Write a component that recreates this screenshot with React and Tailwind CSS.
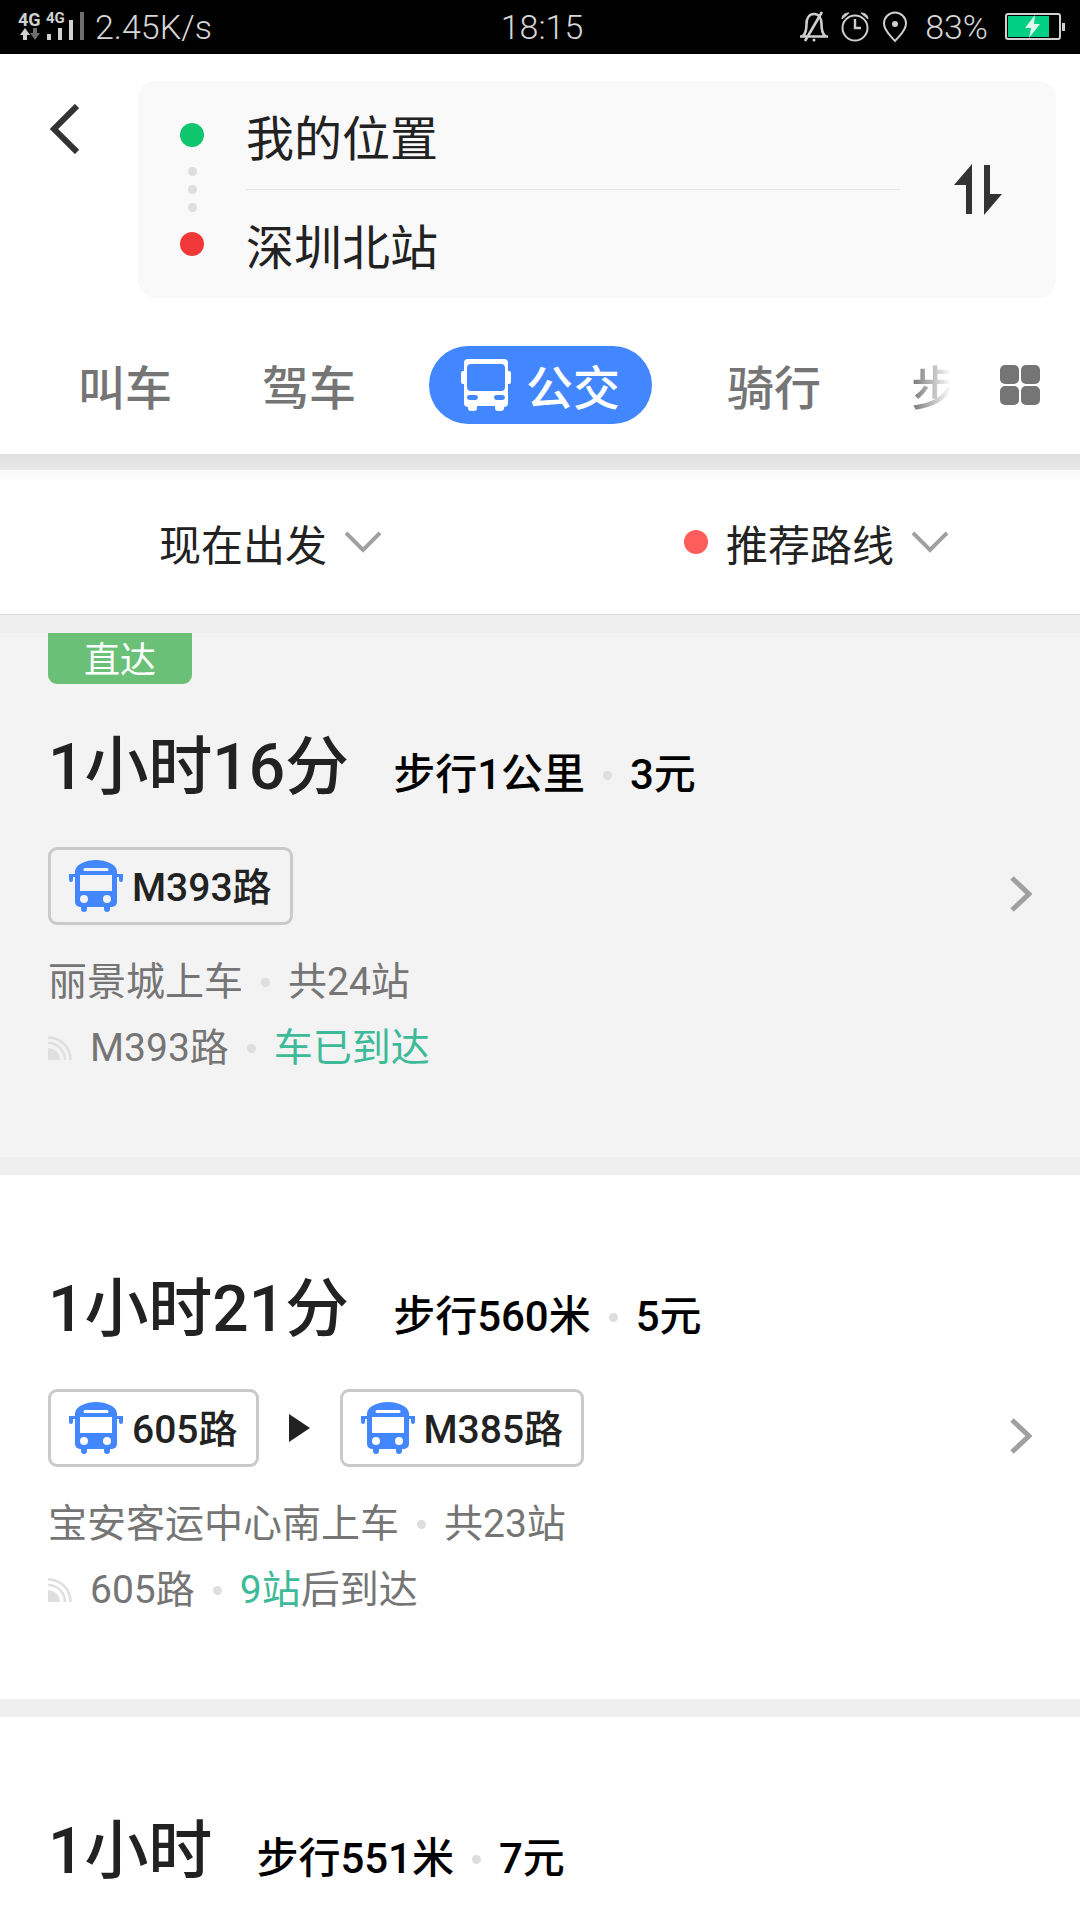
import React, { useState } from 'react';

const tabs = [
  { id: 'taxi', label: '叫车' },
  { id: 'drive', label: '驾车' },
  { id: 'bus', label: '公交' },
  { id: 'ride', label: '骑行' },
];

const routes = [
  {
    id: 1,
    tag: '直达',
    duration: '1小时16分',
    walk: '步行1公里',
    price: '3元',
    lines: ['M393路'],
    stop: '丽景城上车',
    count: '共24站',
    live: { line: 'M393路', highlight: '车已到达', rest: '' },
  },
  {
    id: 2,
    duration: '1小时21分',
    walk: '步行560米',
    price: '5元',
    lines: ['605路', 'M385路'],
    stop: '宝安客运中心南上车',
    count: '共23站',
    live: { line: '605路', highlight: '9站', rest: '后到达' },
  },
  {
    id: 3,
    duration: '1小时',
    walk: '步行551米',
    price: '7元',
    lines: [],
  },
];

const Dot = () => <span className="w-[9px] h-[9px] rounded-full bg-[#dedede] shrink-0" />;

const SignalIcon = () => (
  <svg width="68" height="30" viewBox="0 0 68 30" className="shrink-0">
    <path d="M2 23h3v5h4v-5h3l-5-7z" fill="#d0d0d0" />
    <path d="M15 16h4v5h3l-5 7-5-7h3z" fill="#6e6e6e" />
    <path d="M29 22h4v6h-4zM40 16h4v12h-4zM51 8h4v20h-4z" fill="#d0d0d0" />
    <path d="M62 0h4v28h-4z" fill="#6e6e6e" />
  </svg>
);

const BellOffIcon = () => (
  <svg width="28" height="32" viewBox="0 0 28 32" fill="none" stroke="#cfcfcf" strokeWidth="2.6">
    <path d="M0 25.500h28M3 25c3-3 3.500-7 3.500-12 0-6 3-10 7.500-10s7.500 4 7.500 10c0 5 .5 9 3.500 12" />
    <path d="M22 1L5 30" />
    <circle cx="14" cy="29" r="1.500" fill="#cfcfcf" stroke="none" />
  </svg>
);

const AlarmIcon = () => (
  <svg width="28" height="30" viewBox="0 0 28 30" fill="none" stroke="#cfcfcf" strokeWidth="2">
    <circle cx="14" cy="16" r="12.500" />
    <path d="M14 7v9h6" strokeWidth="2.400" />
    <path d="M1 7c0-4 3-6 7-6zM27 7c0-4-3-6-7-6z" fill="#cfcfcf" strokeWidth="1" />
  </svg>
);

const PinIcon = () => (
  <svg width="26" height="32" viewBox="0 0 26 32" fill="none" stroke="#cfcfcf" strokeWidth="2">
    <path d="M13 30C9 25 2 20 2 12.500a11 11 0 0 1 22 0C24 20 17 25 13 30z" />
    <circle cx="13" cy="13" r="3" fill="#cfcfcf" stroke="none" />
  </svg>
);

const BatteryIcon = () => (
  <svg width="61" height="28" viewBox="0 0 61 28">
    <rect x="1" y="1" width="54" height="25" rx="2" fill="none" stroke="#d0d0d0" strokeWidth="2" />
    <rect x="3" y="3" width="41" height="21" fill="#00d084" />
    <path d="M30 2L20 15h6l-2 10 11-14h-6z" fill="#dff7ec" />
    <rect x="57" y="10" width="3" height="8" fill="#d0d0d0" />
  </svg>
);

const TabBusIcon = () => (
  <svg width="50" height="53" viewBox="0 0 50 53">
    <path
      fillRule="evenodd"
      fill="#fff"
      d="M7 0h36a4 4 0 0 1 4 4v8h1a2 2 0 0 1 2 2v9a2 2 0 0 1-2 2h-1v19a4 4 0 0 1-4 4v1a3 3 0 0 1-3 3h-3a3 3 0 0 1-3-3v-2H16v2a3 3 0 0 1-3 3h-3a3 3 0 0 1-3-3v-1a4 4 0 0 1-4-4V25H2a2 2 0 0 1-2-2v-9a2 2 0 0 1 2-2h1V4a4 4 0 0 1 4-4zM10 5a4 4 0 0 0-4 4v19a4 4 0 0 0 4 4h30a4 4 0 0 0 4-4V9a4 4 0 0 0-4-4zM8.500 36a2.500 2.500 0 0 0 0 5h6a2.500 2.500 0 0 0 0-5zM35.500 36a2.500 2.500 0 0 0 0 5h6a2.500 2.500 0 0 0 0-5z"
    />
  </svg>
);

const LineBusIcon = () => (
  <svg width="54" height="52" viewBox="0 0 54 52">
    <path
      fillRule="evenodd"
      fill="#4287ff"
      d="M6 11C7 4 17 0 27 0s20 4 21 11v31a5 5 0 0 1-5 5h-2v2a3 3 0 0 1-6 0v-2H18v2a3 3 0 0 1-6 0v-2h-1a5 5 0 0 1-5-5zM16 8a1.500 1.500 0 0 0 0 3h22a1.500 1.500 0 0 0 0-3zM11 15v16h32V15zM15 35a4 4 0 1 0 0 8 4 4 0 0 0 0-8zM38 35a4 4 0 1 0 0 8 4 4 0 0 0 0-8z"
    />
    <path d="M7 14H0v6a2 2 0 0 0 4 0v-3h3zM47 14h7v6a2 2 0 0 1-4 0v-3h-3z" fill="#4287ff" />
  </svg>
);

const LiveIcon = () => (
  <svg width="24" height="24" viewBox="0 0 24 24" fill="none" stroke="#dfdfdf" strokeWidth="2.500">
    <path d="M0 12a12 12 0 0 1 12 12H0z" fill="#dfdfdf" stroke="none" />
    <path d="M0 7a17 17 0 0 1 17 17M0 1.500A22 22 0 0 1 22.500 24" />
  </svg>
);

const ChevronDown = () => (
  <svg width="36" height="22" viewBox="0 0 36 22" fill="none" stroke="#a0a0a0" strokeWidth="4">
    <path d="M1 2l17 17L35 2" />
  </svg>
);

const StatusBar = () => (
  <div className="grid grid-cols-3 items-center h-[54px] bg-black pl-[18px] pr-[14px] font-['Roboto','Noto_Sans_CJK_SC',sans-serif] font-light text-[34px] text-[#d6d6d6]">
    <div className="flex items-center gap-[9px]">
      <div className="relative h-[30px]">
        <SignalIcon />
        <span className="absolute left-0 top-0 text-[18px] leading-[15px] font-bold text-[#d0d0d0]">4G</span>
        <span className="absolute left-7 top-0 text-[15px] leading-[12px] font-bold text-[#d0d0d0]">4G</span>
      </div>
      <span>2.45K/s</span>
    </div>
    <span className="text-center">18:15</span>
    <div className="flex items-center justify-end gap-[13px]">
      <BellOffIcon />
      <AlarmIcon />
      <PinIcon />
      <span className="mx-1">83%</span>
      <BatteryIcon />
    </div>
  </div>
);

const SearchPanel = ({ from, to, onSwap }) => (
  <div className="flex items-start pl-[50px] pr-6 pt-[27px]">
    <button type="button" aria-label="返回" className="mt-[23px] mr-[59px]">
      <svg width="29" height="50" viewBox="0 0 29 50" fill="none" stroke="#333" strokeWidth="6">
        <path d="M27 2L4 25l23 23" />
      </svg>
    </button>
    <div className="flex flex-1 items-center h-[217px] rounded-[18px] bg-[#f9f9f9] pl-[42px] pr-[54px]">
      <div className="flex flex-col items-center gap-[9px]">
        <span className="w-6 h-6 rounded-full bg-[#0fc56e] mb-[11px]" />
        <Dot />
        <Dot />
        <Dot />
        <span className="w-6 h-6 rounded-full bg-[#f03838] mt-[11px]" />
      </div>
      <div className="flex-1 ml-[42px] mr-[54px] text-[48px] leading-[108px] text-[#222]">
        <div className="border-b border-[#e6e6e6]">{from}</div>
        <div>{to}</div>
      </div>
      <button type="button" aria-label="交换起点终点" onClick={onSwap}>
        <svg width="48" height="52" viewBox="0 0 48 52" fill="#333">
          <path d="M18 0v50h-6V21H0zM30 1h6v29h12L30 51z" />
        </svg>
      </button>
    </div>
  </div>
);

const TabBar = ({ active, onChange }) => (
  <nav className="flex items-center h-[156px] pt-[18px] pl-[78px] pr-10 bg-white">
    <div className="flex flex-1 items-center text-[47px] font-medium text-[#757575]">
      {tabs.map((tab) =>
        tab.id === active ? (
          <button
            key={tab.id}
            type="button"
            onClick={() => onChange(tab.id)}
            className="flex items-center shrink-0 gap-[15px] h-[78px] -ml-[17px] mr-[75px] px-8 rounded-full bg-[#4287ff] text-white"
          >
            <TabBusIcon />
            {tab.label}
          </button>
        ) : (
          <button key={tab.id} type="button" onClick={() => onChange(tab.id)} className="shrink-0 mr-[90px]">
            {tab.label}
          </button>
        )
      )}
      <button
        type="button"
        aria-label="步行"
        className="bg-linear-to-r from-[#757575] to-white to-85% bg-clip-text text-transparent"
      >
        步
      </button>
    </div>
    <button type="button" aria-label="全部">
      <svg width="40" height="40" viewBox="0 0 40 40" fill="#757575">
        <rect width="19" height="19" rx="5" />
        <rect x="21" width="19" height="19" rx="5" />
        <rect y="21" width="19" height="19" rx="5" />
        <rect x="21" y="21" width="19" height="19" rx="5" />
      </svg>
    </button>
  </nav>
);

const LineChip = ({ name }) => (
  <span className="flex items-center gap-[9px] h-[78px] px-[18px] border-3 border-[#cacaca] rounded-[9px] text-[39px] font-medium text-[#222]">
    <LineBusIcon />
    <span className="pt-1">{name}</span>
  </span>
);

const RouteCard = ({ route, selected }) => (
  <li className={`border-b-18 border-[#efefef] ${selected ? 'bg-[#f3f3f3]' : 'bg-white'}`}>
    <a href="#route" className="block h-[524px] px-12 text-[39px] text-[#757575]">
      <div className="h-[90px]">
        {route.tag && (
          <span className="flex items-center justify-center w-36 h-[51px] pt-1 rounded-b-[9px] bg-[#6bc077] text-[36px] text-white">
            {route.tag}
          </span>
        )}
      </div>
      <div className="flex items-baseline h-[124px] font-medium text-[42px] leading-[90px] text-black">
        <span className="mr-11 text-[64px] text-[#222]">{route.duration}</span>
        <div className="flex items-center gap-[18px]">
          <span>{route.walk}</span>
          <Dot />
          <span>{route.price}</span>
        </div>
      </div>
      {route.lines.length > 0 && (
        <>
          <div className="flex items-center justify-between">
            <div className="flex items-center gap-[30px]">
              {route.lines.map((line, index) => (
                <React.Fragment key={line}>
                  {index > 0 && (
                    <svg width="21" height="28" viewBox="0 0 21 28" fill="#222">
                      <path d="M0 0l21 14L0 28z" />
                    </svg>
                  )}
                  <LineChip name={line} />
                </React.Fragment>
              ))}
            </div>
            <svg width="22" height="36" viewBox="0 0 22 36" fill="none" stroke="#a0a0a0" strokeWidth="5" className="mt-4">
              <path d="M2 2l17 16L2 34" />
            </svg>
          </div>
          <div className="flex items-center gap-[18px] mt-6 leading-[66px]">
            <span>{route.stop}</span>
            <Dot />
            <span>{route.count}</span>
          </div>
          <div className="flex items-center gap-[18px] leading-[66px]">
            <LiveIcon />
            <span>{route.live.line}</span>
            <Dot />
            <span>
              <span className="text-[#3dba98]">{route.live.highlight}</span>
              {route.live.rest}
            </span>
          </div>
        </>
      )}
    </a>
  </li>
);

const App = () => {
  const [activeTab, setActiveTab] = useState('bus');
  const [places, setPlaces] = useState(['我的位置', '深圳北站']);

  return (
    <div className="flex flex-col h-screen overflow-hidden bg-white font-['Noto_Sans_CJK_SC',sans-serif]">
      <StatusBar />
      <SearchPanel from={places[0]} to={places[1]} onSwap={() => setPlaces(([a, b]) => [b, a])} />
      <TabBar active={activeTab} onChange={setActiveTab} />
      <div className="shrink-0 h-4 bg-linear-to-b from-[#e0e0e0] to-[#e9e9e9]" />
      <div className="shrink-0 h-3 bg-linear-to-b from-[#f8f8f8] to-white" />

      <div className="shrink-0 grid grid-cols-2 h-[133px] pb-[12px] border-b border-[#dcdcdc] text-[42px] text-[#222]">
        <button type="button" className="flex items-center justify-center gap-[18px]">
          现在出发
          <ChevronDown />
        </button>
        <button type="button" className="flex items-center justify-center gap-[18px] pl-3">
          <span className="w-6 h-6 rounded-full bg-[#ff5c5c]" />
          推荐路线
          <ChevronDown />
        </button>
      </div>

      <ul className="flex-1 min-h-0 overflow-hidden border-t-18 border-[#efefef] font-['Roboto','Noto_Sans_CJK_SC',sans-serif]">
        {routes.map((route) => (
          <RouteCard key={route.id} route={route} selected={route.id === 1} />
        ))}
      </ul>
    </div>
  );
};

export default App;
